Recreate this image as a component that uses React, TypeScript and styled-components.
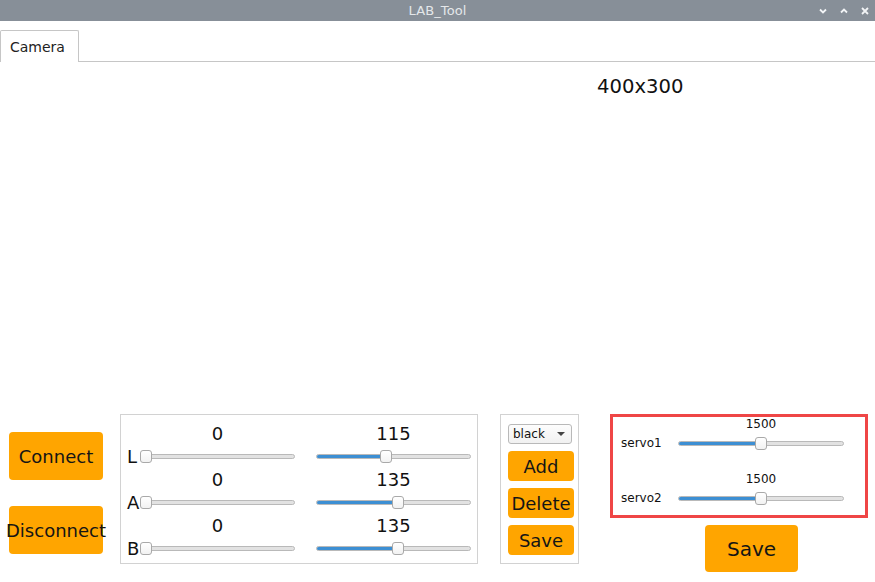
import React from "react";
import styled, { createGlobalStyle } from "styled-components";

const Global = createGlobalStyle`
  html, body { margin: 0; padding: 0; background: #ffffff; }
  body { font-family: "DejaVu Sans", "Liberation Sans", sans-serif; color: #111; }
  * { box-sizing: border-box; }
`;

const Window = styled.div`
  width: 875px;
  height: 582px;
  display: flex;
  flex-direction: column;
  overflow: hidden;
  background: #fff;
`;

const TitleBar = styled.div`
  height: 21px;
  background: #878f98;
  display: flex;
  align-items: center;
  position: relative;
  justify-content: center;
`;

const TitleText = styled.span`
  font-size: 13px;
  color: #e4e7ea;
  letter-spacing: 0.1px;
`;

const TitleButtons = styled.div`
  position: absolute;
  right: 5px;
  top: 0;
  height: 21px;
  display: flex;
  align-items: center;
  gap: 11px;
`;

const TabBar = styled.div`
  height: 41px;
  padding-top: 9px;
  display: flex;
  align-items: stretch;
`;

const Tab = styled.div`
  width: 79px;
  border: 1px solid #c6c6c6;
  border-bottom: none;
  border-radius: 2px 2px 0 0;
  font-size: 14px;
  color: #222;
  padding-left: 9px;
  display: flex;
  align-items: center;
  padding-top: 1px;
`;

const TabLine = styled.div`
  flex: 1;
  border-bottom: 1px solid #c6c6c6;
`;

const Preview = styled.div`
  height: 352px;
  padding-top: 14px;
`;

const Resolution = styled.div`
  margin-left: 597px;
  font-size: 19.6px;
  line-height: 22px;
  color: #111;
`;

const BottomRow = styled.div`
  display: flex;
  align-items: flex-start;
  height: 168px;
`;

const ConnectCol = styled.div`
  margin-left: 9px;
  width: 94px;
  padding-top: 18px;
  display: flex;
  flex-direction: column;
  gap: 26px;
`;

const OrangeButton = styled.button<{ $h: number; $w?: number; $fs?: number }>`
  height: ${(p) => p.$h}px;
  width: ${(p) => (p.$w ? `${p.$w}px` : "100%")};
  background: #ffa500;
  border: none;
  border-radius: 4px;
  font-family: "DejaVu Sans", sans-serif;
  font-size: ${(p) => p.$fs ?? 18}px;
  color: #151515;
  padding: 0;
  display: flex;
  align-items: center;
  justify-content: center;
  white-space: nowrap;
  overflow: visible;
`;

const LabPanel = styled.div`
  margin-left: 17px;
  width: 358px;
  height: 150px;
  border: 1px solid #d2d2d2;
  padding-top: 8px;
  display: flex;
  flex-direction: column;
`;

const LabRow = styled.div`
  display: flex;
  align-items: flex-end;
  gap: 21px;
`;

const ChannelLabel = styled.div`
  width: 19px;
  margin-right: -21px;
  height: 25px;
  display: flex;
  align-items: center;
  font-size: 18px;
  padding-left: 6px;
  color: #111;
`;

const SliderCol = styled.div<{ $w: number }>`
  width: ${(p) => p.$w}px;
  display: flex;
  flex-direction: column;
`;

const Value = styled.div<{ $fs?: number; $h: number }>`
  height: ${(p) => p.$h}px;
  display: flex;
  align-items: center;
  justify-content: center;
  font-size: ${(p) => p.$fs ?? 18}px;
  color: #111;
`;

const SliderLine = styled.div<{ $h: number }>`
  height: ${(p) => p.$h}px;
  display: flex;
  align-items: center;
`;

const MiddlePanel = styled.div`
  margin-left: 22px;
  width: 79px;
  height: 150px;
  border: 1px solid #d2d2d2;
  padding: 9px 0 0 7px;
  display: flex;
  flex-direction: column;
  gap: 7px;
`;

const Combo = styled.div`
  width: 64px;
  height: 20px;
  border: 1px solid #b9b9b9;
  border-radius: 3px;
  background: linear-gradient(#fdfdfd, #f1f1f1);
  font-size: 12px;
  display: flex;
  align-items: center;
  justify-content: space-between;
  padding: 0 6px 0 4px;
  color: #111;
`;

const Arrow = styled.span`
  width: 0;
  height: 0;
  border-left: 4px solid transparent;
  border-right: 4px solid transparent;
  border-top: 4px solid #444;
`;

const RightCol = styled.div`
  margin-left: 31px;
  width: 258px;
  display: flex;
  flex-direction: column;
`;

const ServoPanel = styled.div`
  height: 104px;
  border: 3px solid #ef4646;
  padding: 0 0 0 8px;
  display: flex;
  flex-direction: column;
  gap: 17px;
`;

const ServoRow = styled.div`
  display: flex;
  align-items: flex-end;
`;

const ServoLabel = styled.div`
  width: 57px;
  height: 24px;
  display: flex;
  align-items: center;
  font-size: 12px;
  color: #111;
`;

const SaveWrap = styled.div`
  margin-top: 7px;
  padding-left: 95px;
`;

const SliderBox = styled.div<{ $w: number }>`
  position: relative;
  width: ${(p) => p.$w}px;
  height: 13px;
  display: flex;
  align-items: center;
`;

const Groove = styled.div`
  position: relative;
  width: 100%;
  height: 5px;
  border: 1px solid #b9b9b9;
  border-radius: 3px;
  background: #e2e2e2;
  overflow: hidden;
`;

const Fill = styled.div`
  height: 100%;
  background: #3d8fd3;
`;

const Handle = styled.div`
  position: absolute;
  top: 0;
  width: 12px;
  height: 13px;
  border: 1px solid #a9a9a9;
  border-radius: 3px;
  background: linear-gradient(#ffffff, #f2f2f2);
`;

function Slider({ value, min, max, width }: { value: number; min: number; max: number; width: number }) {
  const frac = (value - min) / (max - min);
  const left = frac * (width - 12);
  return (
    <SliderBox $w={width}>
      <Groove>
        <Fill style={{ width: `${left + 6}px`, display: frac > 0 ? "block" : "none" }} />
      </Groove>
      <Handle style={{ left: `${left}px` }} />
    </SliderBox>
  );
}

const rows = [
  { ch: "L", lo: 0, hi: 115 },
  { ch: "A", lo: 0, hi: 135 },
  { ch: "B", lo: 0, hi: 135 },
];

function LabSlider({ value }: { value: number }) {
  return (
    <SliderCol $w={155}>
      <Value $h={21}>{value}</Value>
      <SliderLine $h={25}>
        <Slider value={value} min={0} max={255} width={155} />
      </SliderLine>
    </SliderCol>
  );
}

export default function App() {
  return (
    <Window>
      <Global />
      <TitleBar>
        <TitleText>LAB_Tool</TitleText>
        <TitleButtons>
          <svg width="10" height="10" viewBox="0 0 10 10">
            <path d="M2 3.5 L5 6.5 L8 3.5" stroke="#f2f4f6" strokeWidth="1.8" fill="none" />
          </svg>
          <svg width="10" height="10" viewBox="0 0 10 10">
            <path d="M2 6.5 L5 3.5 L8 6.5" stroke="#f2f4f6" strokeWidth="1.8" fill="none" />
          </svg>
          <svg width="10" height="10" viewBox="0 0 10 10">
            <path d="M2 2 L8 8 M8 2 L2 8" stroke="#f2f4f6" strokeWidth="1.8" fill="none" />
          </svg>
        </TitleButtons>
      </TitleBar>
      <TabBar>
        <Tab>Camera</Tab>
        <TabLine />
      </TabBar>
      <Preview>
        <Resolution>400x300</Resolution>
      </Preview>
      <BottomRow>
        <ConnectCol>
          <OrangeButton $h={48}>Connect</OrangeButton>
          <OrangeButton $h={48}>Disconnect</OrangeButton>
        </ConnectCol>
        <LabPanel>
          {rows.map((r) => (
            <LabRow key={r.ch}>
              <ChannelLabel>{r.ch}</ChannelLabel>
              <LabSlider value={r.lo} />
              <LabSlider value={r.hi} />
            </LabRow>
          ))}
        </LabPanel>
        <MiddlePanel>
          <Combo>
            <span>black</span>
            <Arrow />
          </Combo>
          <OrangeButton $h={30} $w={66}>Add</OrangeButton>
          <OrangeButton $h={30} $w={66}>Delete</OrangeButton>
          <OrangeButton $h={30} $w={66}>Save</OrangeButton>
        </MiddlePanel>
        <RightCol>
          <ServoPanel>
            {["servo1", "servo2"].map((s) => (
              <ServoRow key={s}>
                <ServoLabel>{s}</ServoLabel>
                <SliderCol $w={166}>
                  <Value $h={14} $fs={12}>1500</Value>
                  <SliderLine $h={24}>
                    <Slider value={1500} min={500} max={2500} width={166} />
                  </SliderLine>
                </SliderCol>
              </ServoRow>
            ))}
          </ServoPanel>
          <SaveWrap>
            <OrangeButton $h={47} $w={93} $fs={20}>Save</OrangeButton>
          </SaveWrap>
        </RightCol>
      </BottomRow>
    </Window>
  );
}
